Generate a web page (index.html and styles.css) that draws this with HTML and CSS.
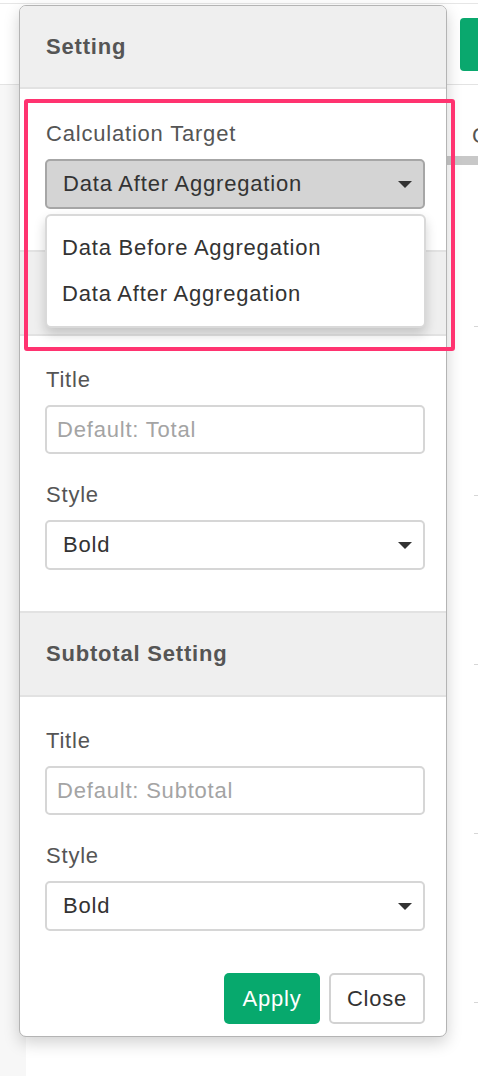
FILE: index.html
```html
<!DOCTYPE html>
<html>
<head>
<meta charset="utf-8">
<link rel="stylesheet" href="styles.css">
</head>
<body>
<div class="app">
  <div class="topbar">
    <div class="top-spacer"></div>
    <div class="green-btn"></div>
  </div>
  <div class="main">
    <div class="sidebar"></div>
    <div class="content">
      <div class="tab-label">C</div>
      <div class="tab-bar"></div>
      <div class="ticks">
        <div class="tick"></div>
        <div class="tick"></div>
        <div class="tick"></div>
        <div class="tick"></div>
        <div class="tick"></div>
      </div>
    </div>
  </div>

  <div class="popover">
    <div class="pop-header">Setting</div>
    <div class="pop-section first">
      <div class="field-label">Calculation Target</div>
      <div class="select active">
        <span>Data After Aggregation</span>
        <span class="caret"></span>
      </div>
      <div class="menu">
        <div class="menu-item">Data Before Aggregation</div>
        <div class="menu-item">Data After Aggregation</div>
      </div>
    </div>
    <div class="pop-subheader"></div>
    <div class="pop-section">
      <div class="field-label">Title</div>
      <div class="input placeholder">Default: Total</div>
      <div class="field-label">Style</div>
      <div class="select">
        <span>Bold</span>
        <span class="caret"></span>
      </div>
    </div>
    <div class="pop-subheader">Subtotal Setting</div>
    <div class="pop-section last">
      <div class="field-label">Title</div>
      <div class="input placeholder">Default: Subtotal</div>
      <div class="field-label">Style</div>
      <div class="select">
        <span>Bold</span>
        <span class="caret"></span>
      </div>
      <div class="actions">
        <div class="btn btn-primary">Apply</div>
        <div class="btn btn-default">Close</div>
      </div>
    </div>
  </div>

  <div class="highlight"></div>
</div>
</body>
</html>
```
FILE: styles.css
```css
* { box-sizing: border-box; }
html, body {
  margin: 0;
  padding: 0;
  background: #fff;
  font-family: "Liberation Sans", Arial, sans-serif;
}
.app {
  position: relative;
  width: 478px;
  height: 1076px;
  overflow: hidden;
  font-size: 22px;
  letter-spacing: 0.8px;
}
.topbar {
  border-top: 1px solid #e6e6e6;
  margin-top: 3px;
  border-bottom: 1px solid #e3e3e3;
  display: flex;
  align-items: flex-start;
  height: 82px;
}
.top-spacer { flex: 1; }
.green-btn {
  width: 30px;
  height: 53px;
  margin-top: 14px;
  margin-right: -12px;
  background: #0aa86e;
  border-radius: 4px;
}
.main {
  display: flex;
  height: 991px;
}
.sidebar {
  width: 26px;
  flex-shrink: 0;
  background: #f7f7f7;
}
.content {
  flex: 1;
  min-width: 0;
  overflow: hidden;
  padding-left: 420px;
}
.tab-label {
  color: #555;
  padding-left: 26px;
  margin-top: 39px;
  line-height: 24px;
  white-space: nowrap;
}
.tab-bar {
  margin-top: 8px;
  margin-left: 0;
  height: 9px;
  background: #c8c8c8;
}
.ticks {
  display: flex;
  flex-direction: column;
  gap: 168px;
  padding-top: 161px;
  padding-left: 28px;
}
.tick {
  width: 6px;
  height: 1px;
  background: #d6d6d6;
}

/* popover overlay */
.popover {
  position: absolute;
  left: 19px;
  top: 5px;
  width: 428px;
  height: 1032px;
  background: #fff;
  border: 1px solid #b4b4b4;
  border-radius: 7px;
  box-shadow: 0 6px 16px rgba(0,0,0,0.18);
}
.pop-header {
  height: 83px;
  background: #efefef;
  border-bottom: 2px solid #e2e2e2;
  border-radius: 6px 6px 0 0;
  padding-left: 26px;
  display: flex;
  align-items: center;
  font-weight: bold;
  color: #555;
}
.pop-section {
  padding: 32px 21px 41px 25px;
  position: relative;
}
.pop-section.first { padding-top: 33px; padding-bottom: 41px; }
.pop-section.last { padding-bottom: 13px; }
.pop-subheader {
  height: 86px;
  background: #efefef;
  border-top: 2px solid #e2e2e2;
  border-bottom: 2px solid #e2e2e2;
  padding-left: 26px;
  display: flex;
  align-items: center;
  font-weight: bold;
  color: #555;
}
.field-label {
  line-height: 24px;
  color: #555;
  padding-left: 1px;
}
.input, .select {
  margin-top: 13px;
  height: 49px;
  border: 2px solid #d6d6d6;
  border-radius: 5px;
  display: flex;
  align-items: center;
  padding-left: 16px;
  padding-right: 11px;
  color: #333;
  background: #fff;
}
.input { margin-bottom: 29px; }
.input.placeholder { color: #a4a4a4; padding-left: 10px; }
.select { justify-content: space-between; height: 50px; }
.select.active {
  background: #d4d4d4;
  border-color: #a6a6a6;
  padding-left: 16px;
}
.caret {
  width: 0;
  height: 0;
  border-left: 7px solid transparent;
  border-right: 7px solid transparent;
  border-top: 7px solid #333;
}
.menu {
  position: absolute;
  left: 25px;
  top: 125px;
  width: 381px;
  height: 114px;
  background: #fff;
  border: 2px solid #d9d9d9;
  border-radius: 6px;
  box-shadow: 0 6px 12px rgba(0,0,0,0.18);
  padding-top: 9px;
  z-index: 2;
}
.menu-item {
  line-height: 46px;
  height: 46px;
  color: #333;
  padding-left: 15px;
}
.actions {
  display: flex;
  justify-content: flex-end;
  gap: 9px;
  margin-top: 42px;
}
.btn {
  height: 51px;
  width: 96px;
  border-radius: 5px;
  display: flex;
  align-items: center;
  justify-content: center;
}
.btn-primary {
  background: #07a96d;
  color: #fff;
}
.btn-default {
  background: #fff;
  border: 2px solid #d2d2d2;
  color: #333;
}
.highlight {
  position: absolute;
  left: 24px;
  top: 99px;
  width: 431px;
  height: 252px;
  border: 4px solid #ff3370;
  border-radius: 3px;
  z-index: 5;
}
```
